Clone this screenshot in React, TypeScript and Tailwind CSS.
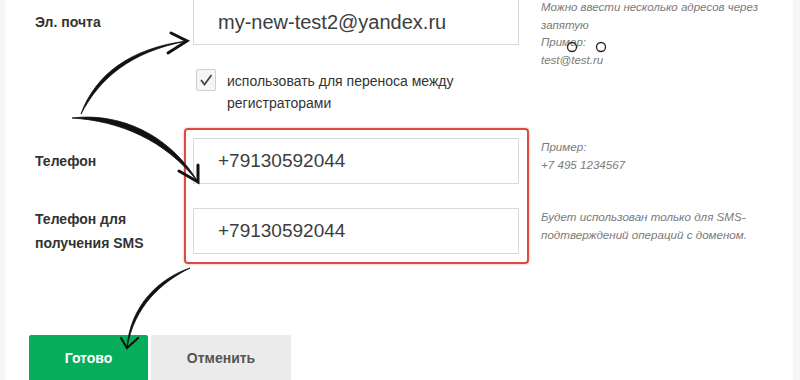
const font = { fontFamily: '"Liberation Sans", Arial, sans-serif' }

function Field({ value, size = 'text-[20px]' }: { value: string; size?: string }) {
	return (
		<div className={`h-[46px] w-[326px] border border-[#d9d9d9] bg-white flex items-center pl-[24px] text-[#3d3d3d] ${size}`}>
			{value}
		</div>
	)
}

function Arrows() {
	return (
		<svg className="absolute inset-0 pointer-events-none" width="800" height="380" viewBox="0 0 800 380">
			{/* arrow to email */}
			<path d="M81,114 C95,75 130,48 187,41 C130,52 100,78 81,114 Z" fill="#111" stroke="#111" strokeWidth="0.8" />
			<polyline points="171,33 187,41 168,53" fill="none" stroke="#111" strokeWidth="3" strokeLinejoin="miter" strokeLinecap="round" />
			{/* arrow to phone */}
			<path d="M72,118 C120,112 170,135 198,182 C165,140 120,121 72,118 Z" fill="#111" stroke="#111" strokeWidth="0.8" />
			<polyline points="179,171 198,182 198,165" fill="none" stroke="#111" strokeWidth="3" strokeLinejoin="miter" strokeLinecap="round" />
			{/* arrow to button */}
			<path d="M190,268 C160,278 130,305 127,348 C134,306 162,282 190,268 Z" fill="#111" stroke="#111" strokeWidth="0.8" />
			<polyline points="121,338 127,348 138,338" fill="none" stroke="#111" strokeWidth="2.2" strokeLinejoin="miter" strokeLinecap="round" />
			{/* cursor marks */}
			<circle cx="572" cy="47" r="4.5" fill="none" stroke="#222" strokeWidth="1.3" />
			<circle cx="601" cy="47" r="4.5" fill="none" stroke="#222" strokeWidth="1.3" />
		</svg>
	)
}

export default function App() {
	return (
		<div className="relative w-[800px] h-[380px] overflow-hidden flex bg-[#f6f6f6]" style={font}>
			<div className="w-[5px]" />
			<div className="w-[788px] bg-white pl-[24px] pr-[10px] flex flex-col">
				{/* email */}
				<div className="flex mt-[-1px]">
					<div className="w-[164px] pl-[6px] h-[46px] flex items-center text-[14px] font-bold text-[#333]">
						Эл. почта
					</div>
					<div className="flex flex-col w-[326px]">
						<Field value="my-new-test2@yandex.ru" />
						<div className="flex mt-[24px] ml-[3px]">
							<div className="w-[20px] h-[22px] border border-[#cfcfcf] bg-[#f5f5f5] rounded-[2px] flex items-center justify-center shrink-0">
								<svg width="16" height="16" viewBox="0 0 16 16">
									<polyline points="3,8 6.5,12.5 13.5,3" fill="none" stroke="#444" strokeWidth="1.8" />
								</svg>
							</div>
							<div className="ml-[11px] mt-px text-[14px] leading-[22px] text-[#333]">
								использовать для переноса между
								<br />
								регистраторами
							</div>
						</div>
					</div>
					<div className="ml-[22px] text-[11.5px] italic leading-[17.5px] text-[#7a7a7a]">
						Можно ввести несколько адресов через
						<br />
						запятую
						<br />
						Пример:
						<br />
						test@test.ru
					</div>
				</div>

				{/* phones */}
				<div className="flex mt-[14px]">
					<div className="w-[155px] pl-[6px] pt-[10px] flex flex-col gap-[24px] text-[14px] font-bold text-[#333]">
						<div className="h-[46px] flex items-center">Телефон</div>
						<div className="h-[46px] flex items-center leading-[24px]">
							Телефон для
							<br />
							получения SMS
						</div>
					</div>
					<div className="w-[345px] border-2 border-[#de4a40] rounded-[4px] shadow-[0_0_2px_rgba(222,74,64,0.6)] pl-[7px] pr-[8px] py-[8px] flex flex-col gap-[24px]">
						<Field value="+79130592044" size="text-[19px]" />
						<Field value="+79130592044" size="text-[19px]" />
					</div>
					<div className="ml-[12px] pt-[10px] flex flex-col gap-[24px] text-[11.6px] italic leading-[17.5px] text-[#7a7a7a]">
						<div className="h-[46px]">
							Пример:
							<br />
							+7 495 1234567
						</div>
						<div className="h-[46px]">
							Будет использован только для SMS-
							<br />
							подтверждений операций с доменом.
						</div>
					</div>
				</div>

				<div className="mt-[36px] h-px bg-[#ececec]" />

				<div className="flex gap-[3px] mt-[35px]">
					<button className="w-[119px] h-[46px] bg-[#06ae5b] rounded-t-[2px] text-white text-[14px] font-bold">
						Готово
					</button>
					<button className="w-[140px] h-[46px] bg-[#ebebeb] rounded-t-[2px] text-[#555] text-[14px] font-bold">
						Отменить
					</button>
				</div>
			</div>
			<Arrows />
		</div>
	)
}
